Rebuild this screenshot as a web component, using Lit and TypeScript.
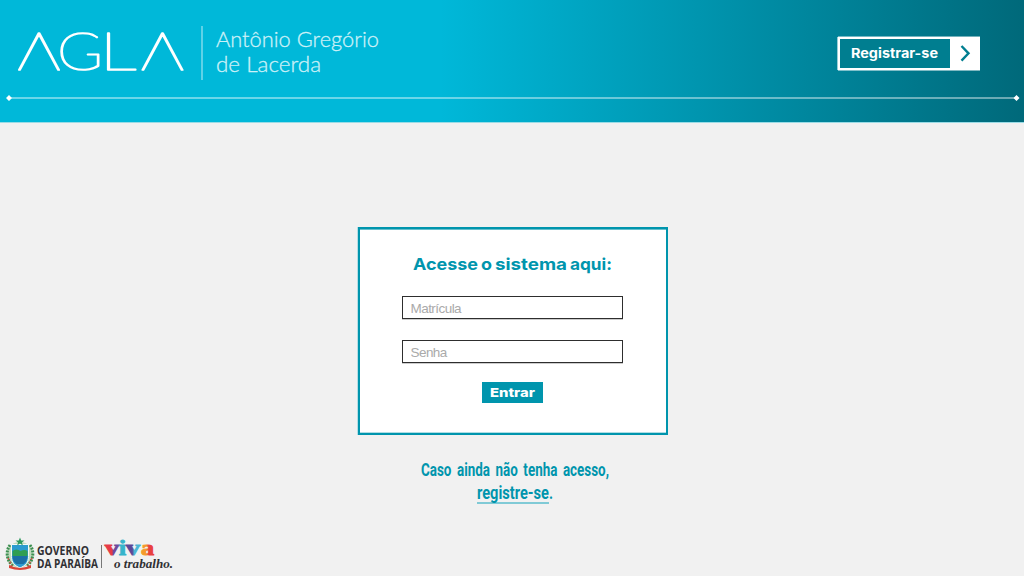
import { LitElement, html, css, svg } from "lit";
import { customElement, property } from "lit/decorators.js";

/* A line of lettering fitted to a fixed width. */
@customElement("fit-text")
class FitText extends LitElement {
  @property() text = "";
  @property({ type: Number }) w = 100;
  @property({ type: Number }) h = 20;
  @property({ type: Number }) base = 16;
  static styles = css`
    :host { display: block; }
    svg { display: block; overflow: visible; }
    text { fill: currentColor; font: inherit; }
  `;
  render() {
    return html`<svg width=${this.w} height=${this.h}>
      <text x="0" y=${this.base} textLength=${this.w} lengthAdjust="spacingAndGlyphs">${this.text}</text>
    </svg>`;
  }
}

@customElement("agla-header")
class AglaHeader extends LitElement {
  static styles = css`
    :host { display: block; height: 122px; color: #fff;
      background: linear-gradient(90deg, #00b8d9 0, #00b8d9 43%, #00697a 100%);
      box-shadow: 0 1px #9bdce6; }
    .row { display: flex; height: 96px; align-items: flex-start; }
    .logo { display: block; margin: 10px 0 0 16px; flex: none; }
    .logo text { font: 100 51px Lato, sans-serif; fill: #fff; stroke: #fff; stroke-width: 1.6px; stroke-linejoin: round; }
    .bar { width: 2px; height: 54px; margin: 26px 0 0 15px; background: #5fd2e7; }
    .name { margin: 26px 0 0 13px; color: #cdf1f8; font: 300 22px Lato, sans-serif; stroke: #cdf1f8; stroke-width: .3px; }
    .reg { display: flex; margin: 37px 44px 0 auto; height: 33px; width: 142px; box-sizing: border-box;
      border: 2px solid #fff; background: #fff; padding: 0; cursor: pointer;
      box-shadow: 0 -1px rgba(255, 255, 255, .45), 0 1px rgba(255, 255, 255, .5), -1px 0 rgba(255, 255, 255, .6); }
    .label { width: 110px; padding-right: 2px; box-sizing: border-box; background: #007e90; color: #fff; font: 700 13px Inter, sans-serif;
      display: flex; align-items: center; justify-content: center; }
    .reg svg { display: block; }
    .arrow { margin: 5px 0 0 9px; }
    .rule { display: block; width: 1024px; height: 8px; margin-top: -2px; }
  `;
  render() {
    return html`
      <div class="row">
        <svg class="logo" width="170" height="76" role="img" aria-label="AGLA">
          <text x="1.500" y="59.500" textLength="43" lengthAdjust="spacingAndGlyphs">Λ</text>
          <text x="41" y="59.500" textLength="46" lengthAdjust="spacingAndGlyphs">G</text>
          <text x="83.500" y="59.500" textLength="37" lengthAdjust="spacingAndGlyphs">L</text>
          <text x="125" y="60" textLength="43" lengthAdjust="spacingAndGlyphs">Λ</text>
        </svg>
        <div class="bar"></div>
        <div class="name">
          <fit-text text="Antônio Gregório" w="163" h="25" base="21"></fit-text>
          <fit-text text="de Lacerda" w="105" h="25" base="21"></fit-text>
        </div>
        <button class="reg">
          <span class="label"><fit-text text="Registrar-se" w="87" h="20" base="14"></fit-text></span>
          <svg class="arrow" width="14" height="18"><path d="M2.500 2 9.500 9.300 2.500 16.600" fill="none" stroke="#007e90" stroke-width="2.400"/></svg>
        </button>
      </div>
      <svg class="rule">
        <path d="M9 4H1017" stroke="#fff" stroke-opacity=".42" stroke-width="2"/>
        <path d="M6 4l3-3 3 3-3 3zM1013.500 4l3-3 3 3-3 3z" fill="#fff"/>
      </svg>`;
  }
}

@customElement("login-card")
class LoginCard extends LitElement {
  static styles = css`
    :host { display: flex; flex-direction: column; align-items: center; box-sizing: border-box;
      width: 310px; height: 208px; padding-right: 1px; background: #fff; border: 2px solid #0095ad;
      box-shadow: -1px 0 #b5dee5, inset 0 1px #66c0cd, inset 0 -1px #b0dde4; }
    .title { display: flex; justify-content: space-between; width: 199px; color: #0095ad;
      font: 700 16.500px Inter, sans-serif; margin-top: 25px; }
    input { box-sizing: border-box; width: 221px; height: 23px; margin: 0 1px 0 0; border: 1px solid #2e2e2e; border-radius: 0;
      padding: 1px 7px 0 8px; background: #fff; font: 13.500px "Liberation Sans", sans-serif; letter-spacing: -.55px; outline: 0;
      box-shadow: 0 1px #ccc; }
    input::placeholder { color: #aaa; opacity: 1; }
    .a { margin-top: 18px; }
    .b { margin-top: 21px; }
    button { border: 0; padding: 0 0 0 1px; box-sizing: border-box; margin: 19px 1px 0 0; width: 61px; height: 21px; background: #0095ad;
      color: #fff; font: 800 12px Inter, sans-serif; display: flex; justify-content: center; cursor: pointer; }
  `;
  render() {
    return html`
      <div class="title">
        <fit-text text="Acesse" w="65" h="24" base="16"></fit-text>
        <fit-text text="o" w="11" h="24" base="16"></fit-text>
        <fit-text text="sistema" w="72" h="24" base="16"></fit-text>
        <fit-text text="aqui:" w="42" h="24" base="16"></fit-text>
      </div>
      <input class="a" placeholder="Matrícula" />
      <input class="b" type="password" placeholder="Senha" />
      <button><fit-text text="Entrar" w="45" h="21" base="15"></fit-text></button>`;
  }
}

@customElement("gov-brand")
class GovBrand extends LitElement {
  static styles = css`
    :host { display: block; }
    svg { display: block; }
    .gov { font: 700 12px "Open Sans", sans-serif; fill: #303034; }
    .viva { font: 700 20px "Liberation Serif", serif; stroke-width: 1px; }
    .work { font: italic 700 13px "Liberation Serif", serif; fill: #303034; }
  `;
  render() {
    const letters = [
      ["v", 105, 14, "url(#red)"], ["i", 119, 7, "#35b4cb"], ["v", 126, 14, "url(#violet)"], ["a", 141, 13, "url(#warm)"],
    ];
    return html`<svg width="180" height="40" viewBox="0 536 180 40">
      <defs>
        <linearGradient id="red"><stop offset=".5" stop-color="#e63a48"/><stop offset=".6" stop-color="#6f4a9c"/></linearGradient>
        <linearGradient id="violet"><stop offset=".45" stop-color="#5b4797"/><stop offset=".6" stop-color="#4bb6d5"/></linearGradient>
        <linearGradient id="warm"><stop offset=".4" stop-color="#f59a2c"/><stop offset=".6" stop-color="#e8413f"/></linearGradient>
      </defs>
      <path d="M20 542C11 542 5 550 7 557c1 6 5 10 12 11 8-1 13-5 14-11 1-8-4-15-13-15z" fill="#c3dbc0"/>
      <path d="M10 545c-5 7-3 16 3 21M30 545c5 7 3 16-3 21" fill="none" stroke="#3c8f50" stroke-width="3" stroke-dasharray="2 1"/>
      <path d="M8 558l4 8M32 558l-4 8" stroke="#d0514a" stroke-width="1.500" stroke-dasharray="2 2"/>
      <path d="M11.500 544.500h17v12c0 6-3 9-8.500 11.500-5.500-2.500-8.500-5.500-8.500-11.500z" fill="#2b9bd0" stroke="#f5faf6"/>
      <path d="M12.500 551q4-3 8 0 4-2 7 0v5h-15z" fill="#2f9e52"/><path d="M12.500 556h15q0 5-4 8h-7q-4-3-4-8z" fill="#1b6fa5"/>
      <path d="M20 537.500l1.200 3h3.300l-2.600 2 1 3-2.900-2-2.900 2 1-3-2.600-2h3.300z" fill="#2c985c"/>
      <path d="M9 565q11 6 22 0v3q-11 4-22 0z" fill="#d94336"/>
      <text class="gov" x="37" y="555" textLength="52" lengthAdjust="spacingAndGlyphs">GOVERNO</text>
      <text class="gov" x="37" y="567.500" textLength="61" lengthAdjust="spacingAndGlyphs">DA PARAÍBA</text>
      <path d="M101.500 545v23" stroke="#777"/>
      ${letters.map(([c, x, w, f]) => svg`<text class="viva" x=${x} y="555" textLength=${w} lengthAdjust="spacingAndGlyphs" fill=${f} stroke=${f}>${c}</text>`)}
      <text class="work" x="114" y="567.500" textLength="59" lengthAdjust="spacingAndGlyphs">o trabalho.</text>
    </svg>`;
  }
}

@customElement("app-root")
class AppRoot extends LitElement {
  static styles = css`
    :host { display: flex; flex-direction: column; width: 1024px; height: 576px; background: #f1f1f1; overflow: hidden; }
    main { display: flex; flex-direction: column; align-items: center; margin-top: 105px; padding-left: 2px; height: 309px; flex: none; }
    .hint { display: flex; flex-direction: column; align-items: center; margin-top: 22px; padding-left: 3px; color: #0095ad;
      font: 700 18px Roboto, sans-serif; word-spacing: 3px; }
    .line { display: flex; height: 24px; }
    .link { color: inherit; height: 21px; border-bottom: 2px solid #80cad6; }
  `;
  render() {
    return html`
      <agla-header></agla-header>
      <main>
        <login-card></login-card>
        <div class="hint">
          <fit-text class="line" text="Caso ainda não tenha acesso," w="188" h="24" base="18.5"></fit-text>
          <div class="line">
            <a class="link"><fit-text text="registre-se" w="72" h="21" base="18"></fit-text></a>
            <fit-text text="." w="4" h="21" base="18"></fit-text>
          </div>
        </div>
      </main>
      <gov-brand></gov-brand>`;
  }
}
